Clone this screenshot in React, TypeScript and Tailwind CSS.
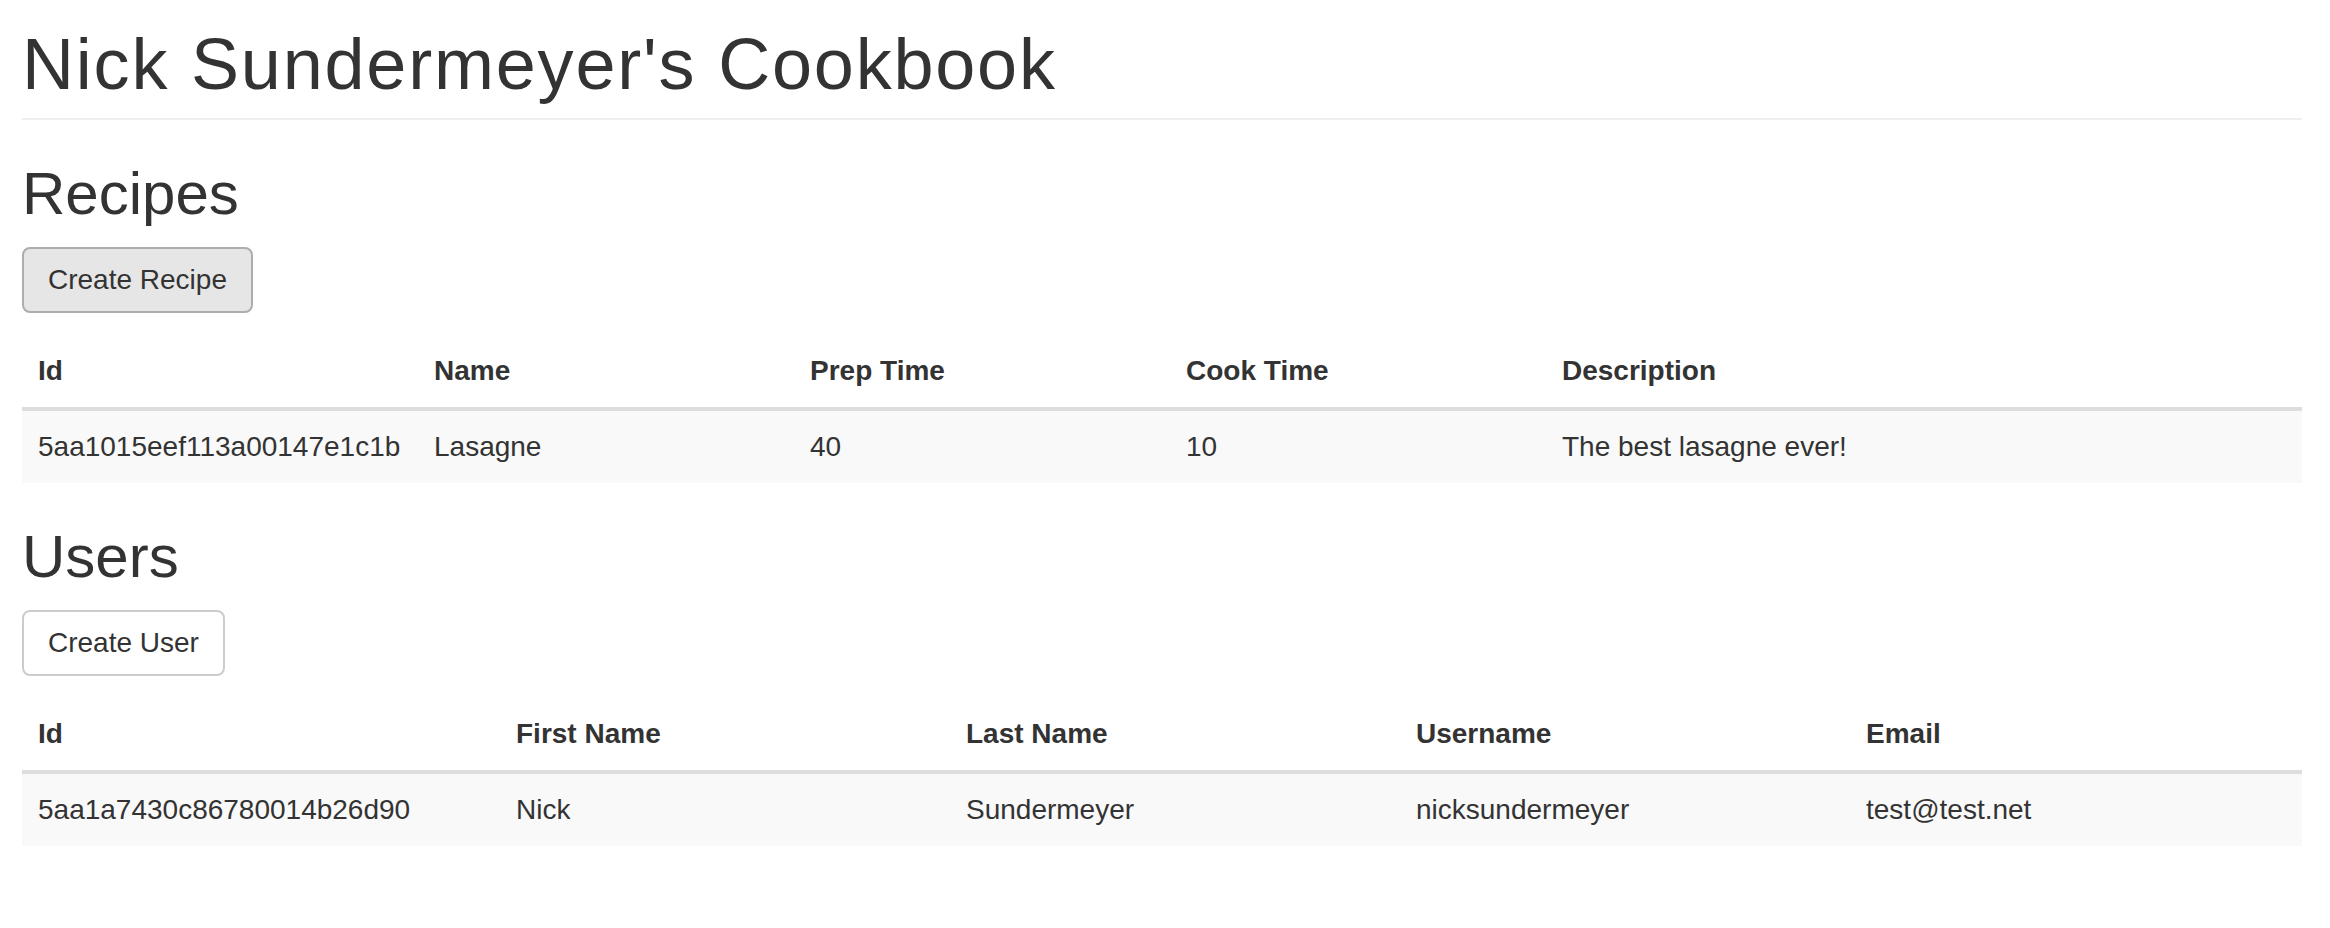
import React from 'react';

type Column = { label: string; width: string };

const recipeColumns: Column[] = [
  { label: 'Id', width: 'w-[396px]' },
  { label: 'Name', width: 'w-[376px]' },
  { label: 'Prep Time', width: 'w-[376px]' },
  { label: 'Cook Time', width: 'w-[376px]' },
  { label: 'Description', width: '' },
];

const recipeRows = [['5aa1015eef113a00147e1c1b', 'Lasagne', '40', '10', 'The best lasagne ever!']];

const userColumns: Column[] = [
  { label: 'Id', width: 'w-[478px]' },
  { label: 'First Name', width: 'w-[450px]' },
  { label: 'Last Name', width: 'w-[450px]' },
  { label: 'Username', width: 'w-[450px]' },
  { label: 'Email', width: '' },
];

const userRows = [['5aa1a7430c86780014b26d90', 'Nick', 'Sundermeyer', 'nicksundermeyer', 'test@test.net']];

interface SectionProps {
  title: string;
  buttonLabel: string;
  pressed?: boolean;
  columns: Column[];
  rows: string[][];
  className?: string;
}

function Section({ title, buttonLabel, pressed, columns, rows, className }: SectionProps) {
  return (
    <section className={className}>
      <h2 className="text-[60px] leading-[66px] font-normal">{title}</h2>

      <button
        type="button"
        className={
          pressed
            ? 'mt-[20px] inline-flex items-center h-[66px] px-[24px] rounded-[8px] border-2 border-[#adadad] bg-[#e6e6e6] text-[28px] text-[#333]'
            : 'mt-[20px] inline-flex items-center h-[66px] px-[24px] rounded-[8px] border-2 border-[#ccc] bg-white text-[28px] text-[#333]'
        }
      >
        {buttonLabel}
      </button>

      <table className="mt-[22px] w-full table-fixed border-separate border-spacing-0 text-[28px] leading-[40px]">
        <thead>
          <tr>
            {columns.map(col => (
              <th
                key={col.label}
                className={`${col.width} text-left font-bold px-[16px] py-[16px] border-b-4 border-[#ddd]`}
              >
                {col.label}
              </th>
            ))}
          </tr>
        </thead>
        <tbody>
          {rows.map(row => (
            <tr key={row[0]} className="bg-[#f9f9f9]">
              {row.map((cell, i) => (
                <td key={i} className="px-[16px] py-[16px] whitespace-nowrap">
                  {cell}
                </td>
              ))}
            </tr>
          ))}
        </tbody>
      </table>
    </section>
  );
}

export default function App() {
  return (
    <div className="min-h-screen bg-white pl-[22px] pr-[28px] text-[#333] font-['Liberation_Sans',Arial,sans-serif]">
      {/* Page header */}
      <div className="pt-[25px] pb-[14px] border-b-2 border-[#eee]">
        <h1 className="text-[72px] leading-[79px] font-normal tracking-[0.025em]">Nick Sundermeyer's Cookbook</h1>
      </div>

      <Section
        className="mt-[41px]"
        title="Recipes"
        buttonLabel="Create Recipe"
        pressed
        columns={recipeColumns}
        rows={recipeRows}
      />

      <Section
        className="mt-[41px]"
        title="Users"
        buttonLabel="Create User"
        columns={userColumns}
        rows={userRows}
      />
    </div>
  );
}
